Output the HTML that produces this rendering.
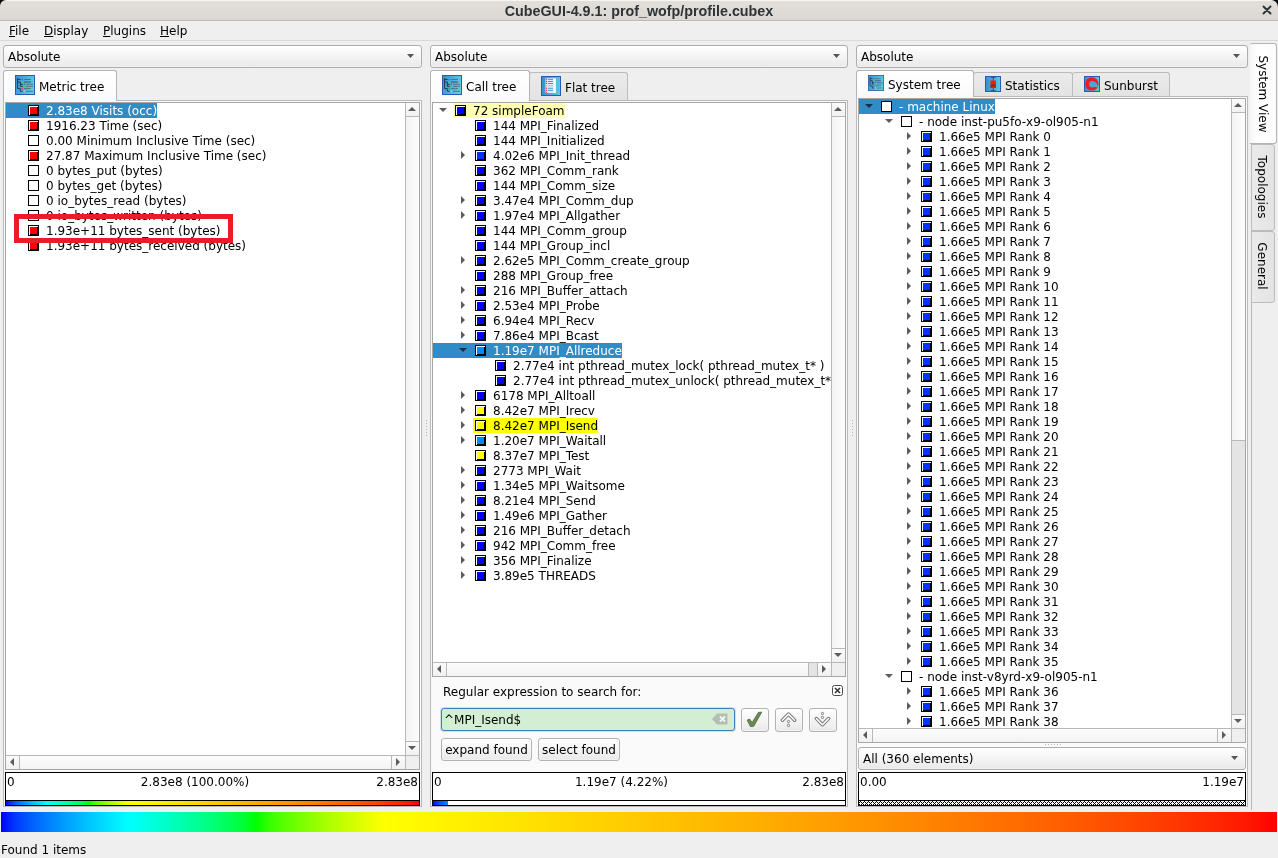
<!DOCTYPE html>
<html><head><meta charset="utf-8"><title>CubeGUI-4.9.1: prof_wofp/profile.cubex</title><style>
*{box-sizing:border-box;margin:0;padding:0}
html,body{width:1278px;height:858px;overflow:hidden;background:#efefef}
body{position:relative;font-family:"DejaVu Sans","Liberation Sans",sans-serif;font-size:12px;color:#000;line-height:15px}
#root{position:absolute;left:0;top:0;width:1278px;height:858px;overflow:hidden;will-change:transform}
.a{position:absolute}
#tb{left:0;top:0;width:1278px;height:10px;background:#000}
#title{left:0;top:0;width:1278px;height:21px;background:linear-gradient(#f6f5f3 0,#f6f5f3 1px,#e2deda 1px,#dbd7d2 100%);border-bottom:1px solid #c1b9b1;border-radius:6px 7px 0 0}
#ttext{left:0;top:0;width:1278px;text-align:center;font:bold 14.3px/23px "Liberation Sans",sans-serif;color:#2e3436}
#menu{left:0;top:21px;width:1278px;height:20px;background:#efefef;border-bottom:1px solid #d9d9d9;border-top:1px solid #f3f3f3}
.mi{top:24px;height:15px;line-height:15px}
.combo{height:23px;border:1px solid #adadad;border-radius:3px;background:linear-gradient(#ffffff,#e9e9e9);line-height:21px;padding-top:1px;padding-left:4px;box-shadow:inset 0 0 0 1px rgba(255,255,255,.35)}
.combo i{position:absolute;right:7px;top:8px;width:7px;height:4px;background:#555;clip-path:polygon(0 0,100% 0,50% 100%)}
.pane{border:1px solid #b9b9b9;background:#fafafa}
.tab{border:1px solid #b4b4b4;border-bottom:none;border-radius:3px 3px 0 0;white-space:nowrap}
.tab.sel{background:linear-gradient(#ffffff,#fafafa);z-index:3}
.tab.un{background:linear-gradient(#ebebeb,#e3e3e3);z-index:1;border-color:#bcbcbc}
.tab span{position:absolute;line-height:15px}
.tree{border:1px solid #a6a6a6;background:#fff}
.vp{overflow:hidden;background:#fff}
.r{position:absolute;height:15px;line-height:15px;white-space:nowrap;padding-right:0;padding-top:1px}
b{position:absolute;width:11px;height:11px;border:1px solid #000;background:#fff}
b.f::after{content:"";position:absolute;left:1px;top:1px;width:7px;height:7px;border-right:1px solid #000;border-bottom:1px solid #000;background:var(--c)}
s{position:absolute;width:0;height:0}
s.c{border-top:4px solid transparent;border-bottom:4px solid transparent;border-left:4px solid #5c5c5c}
s.o{border-left:4px solid transparent;border-right:4px solid transparent;border-top:4px solid #5c5c5c}
s.o.k{border-top-color:#1b2e3d}
.vs{width:14px;border-left:1px solid #b8b8b8;background:#e4e4e4}
.hs{height:14px;border-top:1px solid #b8b8b8;background:#e4e4e4}
.sbtn{background:linear-gradient(#fbfbfb,#f1f1f1);border:0 solid #b8b8b8}
.hnd{background:linear-gradient(90deg,#f3f3f3,#fdfdfd);border:0 solid #b8b8b8}
.hndh{background:linear-gradient(#fdfdfd,#f3f3f3);border:0 solid #b8b8b8}
.ar{position:absolute;width:0;height:0}
.ar.u{border-left:4px solid transparent;border-right:4px solid transparent;border-bottom:4px solid #5c5c5c}
.ar.d{border-left:4px solid transparent;border-right:4px solid transparent;border-top:4px solid #5c5c5c}
.ar.l{border-top:4px solid transparent;border-bottom:4px solid transparent;border-right:4px solid #5c5c5c}
.ar.rt{border-top:4px solid transparent;border-bottom:4px solid transparent;border-left:4px solid #5c5c5c}
.vbox{border:1px solid #000;background:#fff;height:34px}
.vbox span{position:absolute;top:2px;line-height:15px;white-space:nowrap}
.vbox .st{position:absolute;left:0;right:0;bottom:0;height:5px;border-top:1px solid #000}
.btn{border:1px solid #b2b2b2;border-radius:3px;background:linear-gradient(#ffffff,#e9e9e9);text-align:center;line-height:21px;padding-top:1px;box-shadow:inset 0 0 0 1px rgba(255,255,255,.35);white-space:nowrap}
.vt{border:1px solid #b4b4b4;border-radius:0 3px 3px 0}
.vt span{position:absolute;left:50%;top:50%;white-space:nowrap;line-height:15px;transform:translate(-50%,-50%) rotate(90deg)}
</style></head>
<body><div id="root">
<div class="a" id="tb"></div><div class="a" id="title"></div>
<div class="a" id="ttext">CubeGUI-4.9.1: prof_wofp/profile.cubex</div>
<svg class="a" style="left:1262px;top:5px" width="10" height="10" viewBox="0 0 10 10"><path d="M1.5 1.5 L8.5 8.5 M8.5 1.5 L1.5 8.5" stroke="#2e3436" stroke-width="1.9" stroke-linecap="round" fill="none"/></svg>
<div class="a" id="menu"></div>
<div class="a mi" style="left:9px"><u>F</u>ile</div>
<div class="a mi" style="left:44px"><u>D</u>isplay</div>
<div class="a mi" style="left:103px"><u>P</u>lugins</div>
<div class="a mi" style="left:160px"><u>H</u>elp</div>
<div class="a combo" style="left:3px;top:45px;width:419px">Absolute<i></i></div>
<div class="a pane" style="left:3px;top:100px;width:419px;height:707px"></div>
<div class="a tab sel" style="left:3px;top:70px;width:114px;height:31px"><div class="a" style="left:11px;top:4px;line-height:0"><svg width="20" height="20" viewBox="0 0 20 20"><defs><linearGradient id="g1" x1="0" x2="1" y1="0" y2="0.3"><stop offset="0" stop-color="#3a8cd6"/><stop offset="1" stop-color="#5ccbe0"/></linearGradient></defs><rect x=".5" y=".5" width="19" height="19" fill="url(#g1)" stroke="#2b5bb0"/><path d="M2.6 3 V13.6 H5.4 V16.3 H7.6 M2.6 4.5 H5.6 M2.6 7 H5.4 V11.4 H7.7 M5.4 9.3 H7.7" fill="none" stroke="#2d3a44" stroke-width="1"/><g stroke="#4a6b78" stroke-width="1" opacity=".85"><path d="M9 4.5H16M11 9.3H18M11 11.4H18M9 13.6H16M11 16.3H18"/><path d="M9 7H16" stroke-width="1.6"/></g><rect x="6.8" y="3.9" width="1.2" height="1.2" fill="#3f5fe0"/><rect x="6.7" y="6.2" width="1.4" height="1.8" fill="#2fe04a"/><rect x="8.8" y="8.7" width="1.2" height="1.2" fill="#3f5fe0"/><rect x="8.6" y="10.7" width="1.5" height="1.5" fill="#20e83a"/><rect x="6.8" y="13" width="1.2" height="1.4" fill="#d04060"/><rect x="8.7" y="15.5" width="1.3" height="1.6" fill="#e8d040"/></svg></div><span style="left:35px;top:9px">Metric tree</span></div>
<div class="a tree" style="left:5px;top:102px;width:415px;height:668px"></div>
<div class="a vp" style="left:6px;top:103px;width:399px;height:652px">
<div class="r" style="left:0;top:0px;padding-left:40px;background:#308cc6;color:#fff">2.83e8 Visits (occ)</div><b class="f" style="left:22px;top:2px;--c:#ff0000"></b>
<div class="r" style="left:40px;top:15px">1916.23 Time (sec)</div><b class="f" style="left:22px;top:17px;--c:#ff0000"></b>
<div class="r" style="left:40px;top:30px">0.00 Minimum Inclusive Time (sec)</div><b style="left:22px;top:32px"></b>
<div class="r" style="left:40px;top:45px">27.87 Maximum Inclusive Time (sec)</div><b class="f" style="left:22px;top:47px;--c:#ff0000"></b>
<div class="r" style="left:40px;top:60px">0 bytes_put (bytes)</div><b style="left:22px;top:62px"></b>
<div class="r" style="left:40px;top:75px">0 bytes_get (bytes)</div><b style="left:22px;top:77px"></b>
<div class="r" style="left:40px;top:90px">0 io_bytes_read (bytes)</div><b style="left:22px;top:92px"></b>
<div class="r" style="left:40px;top:105px">0 io_bytes_written (bytes)</div><b style="left:22px;top:107px"></b>
<div class="r" style="left:40px;top:120px">1.93e+11 bytes_sent (bytes)</div><b class="f" style="left:22px;top:122px;--c:#ff0000"></b>
<div class="r" style="left:40px;top:135px">1.93e+11 bytes_received (bytes)</div><b class="f" style="left:22px;top:137px;--c:#ff0000"></b>
</div>
<div class="a vs" style="left:405px;top:103px;height:652px"><div class="a sbtn" style="left:0;top:0;width:13px;height:14px;border-bottom-width:1px"><div class="ar u" style="left:2px;top:4px"></div></div><div class="a sbtn" style="left:0;bottom:0;width:13px;height:14px;border-top-width:1px"><div class="ar d" style="left:2px;top:4px"></div></div>
<div class="a hnd" style="left:0;top:14px;width:13px;height:624px;"></div></div>
<div class="a" style="left:405px;top:755px;width:14px;height:14px;background:#efefef;border-left:1px solid #b8b8b8;border-top:1px solid #b8b8b8"></div>
<div class="a hs" style="left:6px;top:755px;width:399px"><div class="a sbtn" style="left:0;top:0;width:14px;height:13px;border-right-width:1px"><div class="ar l" style="left:4px;top:2px"></div></div><div class="a sbtn" style="right:0;top:0;width:14px;height:13px;border-left-width:1px"><div class="ar rt" style="left:4px;top:2px"></div></div>
<div class="a hndh" style="left:14px;top:0;width:371px;height:13px;"></div></div>
<div class="a vbox" style="left:5px;top:772px;width:415px"><span style="left:1px">0</span><span style="left:0;right:35px;text-align:center">2.83e8 (100.00%)</span><span style="right:1px">2.83e8</span><div class="st" style="background:linear-gradient(90deg,#0000ff 0%,#0033ff 1%,#0053ff 2%,#006eff 3%,#0086ff 4%,#009dff 5%,#00b2ff 6%,#00c7ff 7%,#00daff 8%,#00edff 9%,#00ffff 10%,#00ffed 11%,#00ffda 12%,#00ffc7 13%,#00ffb2 14%,#00ff9d 15%,#00ff86 16%,#00ff6e 17%,#00ff53 18%,#00ff33 19%,#00ff00 20%,#33ff00 21%,#53ff00 22%,#6eff00 23%,#86ff00 24%,#9dff00 25%,#b2ff00 26%,#c7ff00 27%,#daff00 28%,#edff00 29%,#ffff00 30%,#fff900 32.5%,#fff200 35%,#ffec00 37.5%,#ffe500 40%,#ffde00 42.5%,#ffd700 45%,#ffd000 47.5%,#ffc900 50%,#ffc200 52.5%,#ffbb00 55%,#ffb400 57.5%,#ffac00 60%,#ffa500 62.5%,#ff9d00 65%,#ff9500 67.5%,#ff8d00 70%,#ff8500 72.5%,#ff7c00 75%,#ff7300 77.5%,#ff6a00 80%,#ff6100 82.5%,#ff5700 85%,#ff4c00 87.5%,#ff4100 90%,#ff3500 92.5%,#ff2800 95%,#ff1900 97.5%,#ff0000 100%)"></div></div>
<div class="a" style="left:14px;top:214px;width:219px;height:29px;border:5px solid #ed1c24;z-index:9"></div>
<div class="a combo" style="left:430px;top:45px;width:418px">Absolute<i></i></div>
<div class="a pane" style="left:430px;top:100px;width:418px;height:707px"></div>
<div class="a tab sel" style="left:430px;top:70px;width:100px;height:31px"><div class="a" style="left:11px;top:4px;line-height:0"><svg width="20" height="20" viewBox="0 0 20 20"><defs><linearGradient id="g2" x1="0" x2="1" y1="0" y2="0.3"><stop offset="0" stop-color="#3a8cd6"/><stop offset="1" stop-color="#5ccbe0"/></linearGradient></defs><rect x=".5" y=".5" width="19" height="19" fill="url(#g2)" stroke="#2b5bb0"/><path d="M2.6 3 V13.6 H5.4 V16.3 H7.6 M2.6 4.5 H5.6 M2.6 7 H5.4 V11.4 H7.7 M5.4 9.3 H7.7" fill="none" stroke="#2d3a44" stroke-width="1"/><g stroke="#4a6b78" stroke-width="1" opacity=".85"><path d="M9 4.5H16M11 9.3H18M11 11.4H18M9 13.6H16M11 16.3H18"/><path d="M9 7H16" stroke-width="1.6"/></g><rect x="6.8" y="3.9" width="1.2" height="1.2" fill="#3f5fe0"/><rect x="6.7" y="6.2" width="1.4" height="1.8" fill="#2fe04a"/><rect x="8.8" y="8.7" width="1.2" height="1.2" fill="#3f5fe0"/><rect x="8.6" y="10.7" width="1.5" height="1.5" fill="#20e83a"/><rect x="6.8" y="13" width="1.2" height="1.4" fill="#d04060"/><rect x="8.7" y="15.5" width="1.3" height="1.6" fill="#e8d040"/></svg></div><span style="left:35px;top:9px">Call tree</span></div>
<div class="a tab un" style="left:529px;top:72px;width:99px;height:28px"><div class="a" style="left:11px;top:3px;line-height:0"><svg width="20" height="20" viewBox="0 0 20 20"><defs><linearGradient id="gf" x1="0" x2="1"><stop offset="0" stop-color="#3a8cd6"/><stop offset="1" stop-color="#5ccbe0"/></linearGradient></defs><rect x=".5" y=".5" width="19" height="19" fill="url(#gf)" stroke="#2b5bb0"/><rect x="4.4" y="2.2" width="10.6" height="14.8" fill="#e8f4fb" opacity=".92"/><rect x="12.6" y="3" width="2" height="13.6" fill="#f6fbff"/><rect x="4.8" y="2.7" width="1.3" height="1.2" fill="#f03030" opacity="1"/><rect x="7" y="2.9" width="5" height=".9" fill="#3a8cd6" opacity="1"/><rect x="4.8" y="4.8" width="1.3" height="1.2" fill="#f03030" opacity="1"/><rect x="7" y="5.0" width="5" height=".9" fill="#3a8cd6" opacity="1"/><rect x="4.8" y="6.8" width="1.3" height="1.2" fill="#f03030" opacity="1"/><rect x="7" y="7.0" width="5" height=".9" fill="#3a8cd6" opacity="1"/><rect x="4.8" y="9.1" width="1.3" height="1.2" fill="#f03030" opacity=".45"/><rect x="7" y="9.3" width="5" height=".9" fill="#3a8cd6" opacity=".45"/><rect x="4.8" y="11.6" width="1.3" height="1.2" fill="#f03030" opacity="1"/><rect x="7" y="11.8" width="5" height=".9" fill="#3a8cd6" opacity="1"/><rect x="4.8" y="13.7" width="1.3" height="1.2" fill="#f03030" opacity="1"/><rect x="7" y="13.9" width="5" height=".9" fill="#3a8cd6" opacity="1"/><rect x="4.8" y="15.7" width="1.3" height="1.2" fill="#f03030" opacity="1"/></svg></div><span style="left:35px;top:8px">Flat tree</span></div>
<div class="a tree" style="left:432px;top:102px;width:414px;height:575px"></div>
<div class="a vp" style="left:433px;top:103px;width:398px;height:559px">
<div class="r" style="left:20px;top:0px;padding-left:20px;background:#ffffb0">72 simpleFoam</div><s class="o" style="left:6px;top:5px"></s><b class="f" style="left:22px;top:2px;--c:#0000ff"></b>
<div class="r" style="left:60px;top:15px">144 MPI_Finalized</div><b class="f" style="left:42px;top:17px;--c:#0000ff"></b>
<div class="r" style="left:60px;top:30px">144 MPI_Initialized</div><b class="f" style="left:42px;top:32px;--c:#0000ff"></b>
<div class="r" style="left:60px;top:45px">4.02e6 MPI_Init_thread</div><s class="c" style="left:28px;top:48px"></s><b class="f" style="left:42px;top:47px;--c:#0033ff"></b>
<div class="r" style="left:60px;top:60px">362 MPI_Comm_rank</div><b class="f" style="left:42px;top:62px;--c:#0000ff"></b>
<div class="r" style="left:60px;top:75px">144 MPI_Comm_size</div><b class="f" style="left:42px;top:77px;--c:#0000ff"></b>
<div class="r" style="left:60px;top:90px">3.47e4 MPI_Comm_dup</div><s class="c" style="left:28px;top:93px"></s><b class="f" style="left:42px;top:92px;--c:#0000ff"></b>
<div class="r" style="left:60px;top:105px">1.97e4 MPI_Allgather</div><s class="c" style="left:28px;top:108px"></s><b class="f" style="left:42px;top:107px;--c:#0000ff"></b>
<div class="r" style="left:60px;top:120px">144 MPI_Comm_group</div><b class="f" style="left:42px;top:122px;--c:#0000ff"></b>
<div class="r" style="left:60px;top:135px">144 MPI_Group_incl</div><b class="f" style="left:42px;top:137px;--c:#0000ff"></b>
<div class="r" style="left:60px;top:150px">2.62e5 MPI_Comm_create_group</div><s class="c" style="left:28px;top:153px"></s><b class="f" style="left:42px;top:152px;--c:#0000ff"></b>
<div class="r" style="left:60px;top:165px">288 MPI_Group_free</div><b class="f" style="left:42px;top:167px;--c:#0000ff"></b>
<div class="r" style="left:60px;top:180px">216 MPI_Buffer_attach</div><s class="c" style="left:28px;top:183px"></s><b class="f" style="left:42px;top:182px;--c:#0000ff"></b>
<div class="r" style="left:60px;top:195px">2.53e4 MPI_Probe</div><s class="c" style="left:28px;top:198px"></s><b class="f" style="left:42px;top:197px;--c:#0000ff"></b>
<div class="r" style="left:60px;top:210px">6.94e4 MPI_Recv</div><s class="c" style="left:28px;top:213px"></s><b class="f" style="left:42px;top:212px;--c:#0000ff"></b>
<div class="r" style="left:60px;top:225px">7.86e4 MPI_Bcast</div><s class="c" style="left:28px;top:228px"></s><b class="f" style="left:42px;top:227px;--c:#0000ff"></b>
<div class="r" style="left:0;top:240px;padding-left:60px;background:#308cc6;color:#fff">1.19e7 MPI_Allreduce</div><s class="o k" style="left:26px;top:245px"></s><b class="f" style="left:42px;top:242px;--c:#0088ff"></b>
<div class="r" style="left:80px;top:255px">2.77e4 int pthread_mutex_lock( pthread_mutex_t* )</div><b class="f" style="left:62px;top:257px;--c:#0000ff"></b>
<div class="r" style="left:80px;top:270px">2.77e4 int pthread_mutex_unlock( pthread_mutex_t* )</div><b class="f" style="left:62px;top:272px;--c:#0000ff"></b>
<div class="r" style="left:60px;top:285px">6178 MPI_Alltoall</div><s class="c" style="left:28px;top:288px"></s><b class="f" style="left:42px;top:287px;--c:#0000ff"></b>
<div class="r" style="left:60px;top:300px">8.42e7 MPI_Irecv</div><s class="c" style="left:28px;top:303px"></s><b class="f" style="left:42px;top:302px;--c:#ffff00"></b>
<div class="r" style="left:40px;top:315px;padding-left:20px;background:#ffff00">8.42e7 MPI_Isend</div><s class="c" style="left:28px;top:318px"></s><b class="f" style="left:42px;top:317px;--c:#ffff00"></b>
<div class="r" style="left:60px;top:330px">1.20e7 MPI_Waitall</div><s class="c" style="left:28px;top:333px"></s><b class="f" style="left:42px;top:332px;--c:#0088ff"></b>
<div class="r" style="left:60px;top:345px">8.37e7 MPI_Test</div><b class="f" style="left:42px;top:347px;--c:#ffff00"></b>
<div class="r" style="left:60px;top:360px">2773 MPI_Wait</div><s class="c" style="left:28px;top:363px"></s><b class="f" style="left:42px;top:362px;--c:#0000ff"></b>
<div class="r" style="left:60px;top:375px">1.34e5 MPI_Waitsome</div><s class="c" style="left:28px;top:378px"></s><b class="f" style="left:42px;top:377px;--c:#0000ff"></b>
<div class="r" style="left:60px;top:390px">8.21e4 MPI_Send</div><s class="c" style="left:28px;top:393px"></s><b class="f" style="left:42px;top:392px;--c:#0000ff"></b>
<div class="r" style="left:60px;top:405px">1.49e6 MPI_Gather</div><s class="c" style="left:28px;top:408px"></s><b class="f" style="left:42px;top:407px;--c:#0000ff"></b>
<div class="r" style="left:60px;top:420px">216 MPI_Buffer_detach</div><s class="c" style="left:28px;top:423px"></s><b class="f" style="left:42px;top:422px;--c:#0000ff"></b>
<div class="r" style="left:60px;top:435px">942 MPI_Comm_free</div><s class="c" style="left:28px;top:438px"></s><b class="f" style="left:42px;top:437px;--c:#0000ff"></b>
<div class="r" style="left:60px;top:450px">356 MPI_Finalize</div><s class="c" style="left:28px;top:453px"></s><b class="f" style="left:42px;top:452px;--c:#0000ff"></b>
<div class="r" style="left:60px;top:465px">3.89e5 THREADS</div><s class="c" style="left:28px;top:468px"></s><b class="f" style="left:42px;top:467px;--c:#0000ff"></b>
</div>
<div class="a vs" style="left:831px;top:103px;height:559px"><div class="a sbtn" style="left:0;top:0;width:13px;height:14px;border-bottom-width:1px"><div class="ar u" style="left:2px;top:4px"></div></div><div class="a sbtn" style="left:0;bottom:0;width:13px;height:14px;border-top-width:1px"><div class="ar d" style="left:2px;top:4px"></div></div>
<div class="a hnd" style="left:0;top:14px;width:13px;height:531px;"></div></div>
<div class="a" style="left:831px;top:662px;width:14px;height:14px;background:#efefef;border-left:1px solid #b8b8b8;border-top:1px solid #b8b8b8"></div>
<div class="a hs" style="left:433px;top:662px;width:398px"><div class="a sbtn" style="left:0;top:0;width:14px;height:13px;border-right-width:1px"><div class="ar l" style="left:4px;top:2px"></div></div><div class="a sbtn" style="right:0;top:0;width:14px;height:13px;border-left-width:1px"><div class="ar rt" style="left:4px;top:2px"></div></div>
<div class="a hndh" style="left:14px;top:0;width:362px;height:13px;border-right-width:1px"></div></div>
<div class="a" style="left:443px;top:685px;white-space:nowrap">Regular expression to search for:</div>
<svg class="a" style="left:832px;top:685px" width="11" height="11" viewBox="0 0 11 11"><rect x=".5" y=".5" width="10" height="10" rx="2" fill="#fcfcfc" stroke="#4a4a4a"/><path d="M3 3L8 8M8 3L3 8" stroke="#3a3a3a" stroke-width="1.7"/></svg>
<div class="a" style="left:441px;top:708px;width:294px;height:23px;border:1px solid #3b7fbd;border-radius:3px;background:#d3efd3;line-height:21px;padding-top:1px;padding-left:2px;box-shadow:0 0 0 1px rgba(80,150,210,.25)">^MPI_Isend$<svg class="a" style="right:6px;top:4px" width="16" height="12" viewBox="0 0 16 12"><path d="M0 6L5 .5H15.5V11.5H5Z" fill="#b4bcb4"/><path d="M8 3.5L13 8.5M13 3.5L8 8.5" stroke="#eef6ee" stroke-width="1.8"/></svg></div>
<div class="a btn" style="left:741px;top:708px;width:28px;height:24px"><svg class="a" style="left:4px;top:2px" width="18" height="18" viewBox="0 0 18 18"><path d="M1.2 9.2L3.5 8L6.2 11.5L12.4 1.4L15.8 1.1L7.7 15.3L4.4 15.5Z" fill="#6a8c52" stroke="#476536" stroke-width=".8" stroke-linejoin="round"/></svg></div>
<div class="a btn" style="left:775px;top:708px;width:28px;height:24px"><svg class="a" style="left:4px;top:2px" width="18" height="18" viewBox="0 0 18 18"><g fill="none" stroke-linecap="round" stroke-linejoin="round"><path d="M2.4 9.2L8.5 3.1L14.6 9.2" stroke="#7a7a7a" stroke-width="3.5"/><path d="M2.4 9.2L8.5 3.1L14.6 9.2" stroke="#fcfcfc" stroke-width="1.5"/></g><circle cx="8.5" cy="10.5" r="1.15" fill="#fcfcfc" stroke="#7a7a7a" stroke-width="1"/><circle cx="8.5" cy="14.45" r="1.15" fill="#fcfcfc" stroke="#7a7a7a" stroke-width="1"/></svg></div>
<div class="a btn" style="left:809px;top:708px;width:28px;height:24px"><svg class="a" style="left:4px;top:2px" width="18" height="18" viewBox="0 0 18 18"><g fill="none" stroke-linecap="round" stroke-linejoin="round"><path d="M2.4 7.6L8.45 13.7L14.5 7.6" stroke="#7a7a7a" stroke-width="3.5"/><path d="M2.4 7.6L8.45 13.7L14.5 7.6" stroke="#fcfcfc" stroke-width="1.5"/></g><circle cx="8.45" cy="2.5" r="1.15" fill="#fcfcfc" stroke="#7a7a7a" stroke-width="1"/><circle cx="8.45" cy="6.4" r="1.15" fill="#fcfcfc" stroke="#7a7a7a" stroke-width="1"/></svg></div>
<div class="a btn" style="left:441px;top:738px;width:91px;height:23px">expand found</div>
<div class="a btn" style="left:538px;top:738px;width:82px;height:23px">select found</div>
<div class="a vbox" style="left:432px;top:772px;width:414px"><span style="left:1px">0</span><span style="left:0;right:35px;text-align:center">1.19e7 (4.22%)</span><span style="right:1px">2.83e8</span><div class="st" style="background:linear-gradient(90deg,#0000ff 0px,#0028ff 2.5px,#0041ff 5px,#0056ff 7.5px,#0069ff 10px,#007bff 12.5px,#008bff 15px,#fff 15px)"></div></div>
<div class="a combo" style="left:856px;top:45px;width:392px">Absolute<i></i></div>
<div class="a pane" style="left:856px;top:96px;width:392px;height:711px"></div>
<div class="a tab sel" style="left:856px;top:70px;width:118px;height:27px"><div class="a" style="left:11px;top:4px;line-height:0"><svg width="16" height="16" viewBox="0 0 20 20"><defs><linearGradient id="g3" x1="0" x2="1" y1="0" y2="0.3"><stop offset="0" stop-color="#3a8cd6"/><stop offset="1" stop-color="#5ccbe0"/></linearGradient></defs><rect x=".5" y=".5" width="19" height="19" fill="url(#g3)" stroke="#2b5bb0"/><path d="M2.6 3 V13.6 H5.4 V16.3 H7.6 M2.6 4.5 H5.6 M2.6 7 H5.4 V11.4 H7.7 M5.4 9.3 H7.7" fill="none" stroke="#2d3a44" stroke-width="1"/><g stroke="#4a6b78" stroke-width="1" opacity=".85"><path d="M9 4.5H16M11 9.3H18M11 11.4H18M9 13.6H16M11 16.3H18"/><path d="M9 7H16" stroke-width="1.6"/></g><rect x="6.8" y="3.9" width="1.2" height="1.2" fill="#3f5fe0"/><rect x="6.7" y="6.2" width="1.4" height="1.8" fill="#2fe04a"/><rect x="8.8" y="8.7" width="1.2" height="1.2" fill="#3f5fe0"/><rect x="8.6" y="10.7" width="1.5" height="1.5" fill="#20e83a"/><rect x="6.8" y="13" width="1.2" height="1.4" fill="#d04060"/><rect x="8.7" y="15.5" width="1.3" height="1.6" fill="#e8d040"/></svg></div><span style="left:31px;top:7px">System tree</span></div>
<div class="a tab un" style="left:973px;top:72px;width:100px;height:24px"><div class="a" style="left:11px;top:3px;line-height:0"><svg width="16" height="16" viewBox="0 0 16 16"><defs><linearGradient id="gs" x1="0" x2="1"><stop offset="0" stop-color="#3a8cd6"/><stop offset="1" stop-color="#5ccbe0"/></linearGradient></defs><rect x=".5" y=".5" width="15" height="15" fill="url(#gs)" stroke="#2b5bb0"/><path d="M8.3 1.4V14.6M6 1.5H10.6M6 14.5H10.6" stroke="#2d4a5a" stroke-width=".8" fill="none"/><rect x="5.5" y="4.5" width="5.4" height="3.8" fill="#ff1a00"/><rect x="5.5" y="8.3" width="5.4" height="3.7" fill="#b81200"/><rect x="5.5" y="10.3" width="5.4" height="1.7" fill="#e0200c"/></svg></div><span style="left:31px;top:6px">Statistics</span></div>
<div class="a tab un" style="left:1072px;top:72px;width:98px;height:24px"><div class="a" style="left:11px;top:3px;line-height:0"><svg width="16" height="16" viewBox="0 0 16 16"><defs><linearGradient id="gu" x1="0" x2="1"><stop offset="0" stop-color="#3a8cd6"/><stop offset="1" stop-color="#5ccbe0"/></linearGradient></defs><rect x=".5" y=".5" width="15" height="15" fill="url(#gu)" stroke="#2b5bb0"/><circle cx="7.9" cy="7.9" r="6.7" fill="#ea1c26"/><path d="M11 6L12.9 7.6L13.4 9.2L15 10.4L12.8 11.6L10.8 10.8Z" fill="#58b0dc" opacity=".9"/><circle cx="8.4" cy="8.3" r="3.3" fill="#4aa6d8"/></svg></div><span style="left:31px;top:6px">Sunburst</span></div>
<div class="a tree" style="left:858px;top:98px;width:388px;height:645px"></div>
<div class="a vp" style="left:859px;top:99px;width:372px;height:629px">
<div class="r" style="left:0;top:0px;padding-left:40px;background:#308cc6;color:#fff">- machine Linux</div><s class="o k" style="left:6px;top:5px"></s><b style="left:22px;top:2px"></b>
<div class="r" style="left:60px;top:15px">- node inst-pu5fo-x9-ol905-n1</div><s class="o" style="left:26px;top:20px"></s><b style="left:42px;top:17px"></b>
<div class="r" style="left:80px;top:30px">1.66e5 MPI Rank 0</div><s class="c" style="left:48px;top:33px"></s><b class="f" style="left:62px;top:32px;--c:#0033ff"></b>
<div class="r" style="left:80px;top:45px">1.66e5 MPI Rank 1</div><s class="c" style="left:48px;top:48px"></s><b class="f" style="left:62px;top:47px;--c:#0033ff"></b>
<div class="r" style="left:80px;top:60px">1.66e5 MPI Rank 2</div><s class="c" style="left:48px;top:63px"></s><b class="f" style="left:62px;top:62px;--c:#0033ff"></b>
<div class="r" style="left:80px;top:75px">1.66e5 MPI Rank 3</div><s class="c" style="left:48px;top:78px"></s><b class="f" style="left:62px;top:77px;--c:#0033ff"></b>
<div class="r" style="left:80px;top:90px">1.66e5 MPI Rank 4</div><s class="c" style="left:48px;top:93px"></s><b class="f" style="left:62px;top:92px;--c:#0033ff"></b>
<div class="r" style="left:80px;top:105px">1.66e5 MPI Rank 5</div><s class="c" style="left:48px;top:108px"></s><b class="f" style="left:62px;top:107px;--c:#0033ff"></b>
<div class="r" style="left:80px;top:120px">1.66e5 MPI Rank 6</div><s class="c" style="left:48px;top:123px"></s><b class="f" style="left:62px;top:122px;--c:#0033ff"></b>
<div class="r" style="left:80px;top:135px">1.66e5 MPI Rank 7</div><s class="c" style="left:48px;top:138px"></s><b class="f" style="left:62px;top:137px;--c:#0033ff"></b>
<div class="r" style="left:80px;top:150px">1.66e5 MPI Rank 8</div><s class="c" style="left:48px;top:153px"></s><b class="f" style="left:62px;top:152px;--c:#0033ff"></b>
<div class="r" style="left:80px;top:165px">1.66e5 MPI Rank 9</div><s class="c" style="left:48px;top:168px"></s><b class="f" style="left:62px;top:167px;--c:#0033ff"></b>
<div class="r" style="left:80px;top:180px">1.66e5 MPI Rank 10</div><s class="c" style="left:48px;top:183px"></s><b class="f" style="left:62px;top:182px;--c:#0033ff"></b>
<div class="r" style="left:80px;top:195px">1.66e5 MPI Rank 11</div><s class="c" style="left:48px;top:198px"></s><b class="f" style="left:62px;top:197px;--c:#0033ff"></b>
<div class="r" style="left:80px;top:210px">1.66e5 MPI Rank 12</div><s class="c" style="left:48px;top:213px"></s><b class="f" style="left:62px;top:212px;--c:#0033ff"></b>
<div class="r" style="left:80px;top:225px">1.66e5 MPI Rank 13</div><s class="c" style="left:48px;top:228px"></s><b class="f" style="left:62px;top:227px;--c:#0033ff"></b>
<div class="r" style="left:80px;top:240px">1.66e5 MPI Rank 14</div><s class="c" style="left:48px;top:243px"></s><b class="f" style="left:62px;top:242px;--c:#0033ff"></b>
<div class="r" style="left:80px;top:255px">1.66e5 MPI Rank 15</div><s class="c" style="left:48px;top:258px"></s><b class="f" style="left:62px;top:257px;--c:#0033ff"></b>
<div class="r" style="left:80px;top:270px">1.66e5 MPI Rank 16</div><s class="c" style="left:48px;top:273px"></s><b class="f" style="left:62px;top:272px;--c:#0033ff"></b>
<div class="r" style="left:80px;top:285px">1.66e5 MPI Rank 17</div><s class="c" style="left:48px;top:288px"></s><b class="f" style="left:62px;top:287px;--c:#0033ff"></b>
<div class="r" style="left:80px;top:300px">1.66e5 MPI Rank 18</div><s class="c" style="left:48px;top:303px"></s><b class="f" style="left:62px;top:302px;--c:#0033ff"></b>
<div class="r" style="left:80px;top:315px">1.66e5 MPI Rank 19</div><s class="c" style="left:48px;top:318px"></s><b class="f" style="left:62px;top:317px;--c:#0033ff"></b>
<div class="r" style="left:80px;top:330px">1.66e5 MPI Rank 20</div><s class="c" style="left:48px;top:333px"></s><b class="f" style="left:62px;top:332px;--c:#0033ff"></b>
<div class="r" style="left:80px;top:345px">1.66e5 MPI Rank 21</div><s class="c" style="left:48px;top:348px"></s><b class="f" style="left:62px;top:347px;--c:#0033ff"></b>
<div class="r" style="left:80px;top:360px">1.66e5 MPI Rank 22</div><s class="c" style="left:48px;top:363px"></s><b class="f" style="left:62px;top:362px;--c:#0033ff"></b>
<div class="r" style="left:80px;top:375px">1.66e5 MPI Rank 23</div><s class="c" style="left:48px;top:378px"></s><b class="f" style="left:62px;top:377px;--c:#0033ff"></b>
<div class="r" style="left:80px;top:390px">1.66e5 MPI Rank 24</div><s class="c" style="left:48px;top:393px"></s><b class="f" style="left:62px;top:392px;--c:#0033ff"></b>
<div class="r" style="left:80px;top:405px">1.66e5 MPI Rank 25</div><s class="c" style="left:48px;top:408px"></s><b class="f" style="left:62px;top:407px;--c:#0033ff"></b>
<div class="r" style="left:80px;top:420px">1.66e5 MPI Rank 26</div><s class="c" style="left:48px;top:423px"></s><b class="f" style="left:62px;top:422px;--c:#0033ff"></b>
<div class="r" style="left:80px;top:435px">1.66e5 MPI Rank 27</div><s class="c" style="left:48px;top:438px"></s><b class="f" style="left:62px;top:437px;--c:#0033ff"></b>
<div class="r" style="left:80px;top:450px">1.66e5 MPI Rank 28</div><s class="c" style="left:48px;top:453px"></s><b class="f" style="left:62px;top:452px;--c:#0033ff"></b>
<div class="r" style="left:80px;top:465px">1.66e5 MPI Rank 29</div><s class="c" style="left:48px;top:468px"></s><b class="f" style="left:62px;top:467px;--c:#0033ff"></b>
<div class="r" style="left:80px;top:480px">1.66e5 MPI Rank 30</div><s class="c" style="left:48px;top:483px"></s><b class="f" style="left:62px;top:482px;--c:#0033ff"></b>
<div class="r" style="left:80px;top:495px">1.66e5 MPI Rank 31</div><s class="c" style="left:48px;top:498px"></s><b class="f" style="left:62px;top:497px;--c:#0033ff"></b>
<div class="r" style="left:80px;top:510px">1.66e5 MPI Rank 32</div><s class="c" style="left:48px;top:513px"></s><b class="f" style="left:62px;top:512px;--c:#0033ff"></b>
<div class="r" style="left:80px;top:525px">1.66e5 MPI Rank 33</div><s class="c" style="left:48px;top:528px"></s><b class="f" style="left:62px;top:527px;--c:#0033ff"></b>
<div class="r" style="left:80px;top:540px">1.66e5 MPI Rank 34</div><s class="c" style="left:48px;top:543px"></s><b class="f" style="left:62px;top:542px;--c:#0033ff"></b>
<div class="r" style="left:80px;top:555px">1.66e5 MPI Rank 35</div><s class="c" style="left:48px;top:558px"></s><b class="f" style="left:62px;top:557px;--c:#0033ff"></b>
<div class="r" style="left:60px;top:570px">- node inst-v8yrd-x9-ol905-n1</div><s class="o" style="left:26px;top:575px"></s><b style="left:42px;top:572px"></b>
<div class="r" style="left:80px;top:585px">1.66e5 MPI Rank 36</div><s class="c" style="left:48px;top:588px"></s><b class="f" style="left:62px;top:587px;--c:#0033ff"></b>
<div class="r" style="left:80px;top:600px">1.66e5 MPI Rank 37</div><s class="c" style="left:48px;top:603px"></s><b class="f" style="left:62px;top:602px;--c:#0033ff"></b>
<div class="r" style="left:80px;top:615px">1.66e5 MPI Rank 38</div><s class="c" style="left:48px;top:618px"></s><b class="f" style="left:62px;top:617px;--c:#0033ff"></b>
</div>
<div class="a vs" style="left:1231px;top:99px;height:629px"><div class="a sbtn" style="left:0;top:0;width:13px;height:14px;border-bottom-width:1px"><div class="ar u" style="left:2px;top:4px"></div></div><div class="a sbtn" style="left:0;bottom:0;width:13px;height:14px;border-top-width:1px"><div class="ar d" style="left:2px;top:4px"></div></div>
<div class="a hnd" style="left:0;top:14px;width:13px;height:328px;border-bottom-width:1px"></div></div>
<div class="a" style="left:1231px;top:728px;width:14px;height:14px;background:#efefef;border-left:1px solid #b8b8b8;border-top:1px solid #b8b8b8"></div>
<div class="a hs" style="left:859px;top:728px;width:372px"><div class="a sbtn" style="left:0;top:0;width:14px;height:13px;border-right-width:1px"><div class="ar l" style="left:4px;top:2px"></div></div><div class="a sbtn" style="right:0;top:0;width:14px;height:13px;border-left-width:1px"><div class="ar rt" style="left:4px;top:2px"></div></div>
<div class="a hndh" style="left:14px;top:0;width:344px;height:13px;"></div></div>
<div class="a" style="left:1045px;top:744px;width:16px;height:1px;background:repeating-linear-gradient(90deg,#b4b4b4 0 1px,transparent 1px 3px)"></div>
<div class="a combo" style="left:858px;top:747px;width:388px">All (360 elements)<i></i></div>
<div class="a vbox" style="left:858px;top:772px;width:388px"><span style="left:1px">0.00</span><span style="right:1px">1.19e7</span><div class="st" style="background:#fff"><svg style="position:absolute;left:0;top:0" width="386" height="4" shape-rendering="crispEdges"><defs><pattern id="d3" width="4" height="4" patternUnits="userSpaceOnUse"><rect width="4" height="4" fill="#fff"/><path d="M1 0h1v1h-1zM0 1h1v1h-1zM2 1h1v1h-1zM3 2h1v1h-1zM0 3h1v1h-1zM2 3h1v1h-1z" fill="#000"/></pattern></defs><rect width="386" height="4" fill="url(#d3)"/></svg></div></div>
<div class="a" style="left:1251px;top:143px;width:1px;height:667px;background:#b9b9b9"></div>
<div class="a vt" style="left:1250px;top:43px;width:27px;height:101px;background:linear-gradient(90deg,#f6f6f6,#ffffff 30%,#fbfbfb);border-left:none;border-radius:2px 3px 3px 0"><span style="margin-left:-1px">System View</span></div>
<div class="a vt" style="left:1251px;top:144px;width:24px;height:87px;background:linear-gradient(90deg,#ebebeb,#e3e3e3);border-color:#bcbcbc"><span style="margin-left:-2px;margin-top:-1px">Topologies</span></div>
<div class="a vt" style="left:1251px;top:231px;width:24px;height:72px;background:linear-gradient(90deg,#ebebeb,#e3e3e3);border-color:#bcbcbc"><span style="margin-left:-2px;margin-top:-1px">General</span></div>
<div class="a" style="left:426px;top:420px;width:1px;height:16px;background:repeating-linear-gradient(#b4b4b4 0 1px,transparent 1px 3px)"></div>
<div class="a" style="left:852px;top:420px;width:1px;height:16px;background:repeating-linear-gradient(#b4b4b4 0 1px,transparent 1px 3px)"></div>
<div class="a" style="left:1px;top:812px;width:1276px;height:20px;background:linear-gradient(90deg,#0000ff 0%,#0033ff 1%,#0053ff 2%,#006eff 3%,#0086ff 4%,#009dff 5%,#00b2ff 6%,#00c7ff 7%,#00daff 8%,#00edff 9%,#00ffff 10%,#00ffed 11%,#00ffda 12%,#00ffc7 13%,#00ffb2 14%,#00ff9d 15%,#00ff86 16%,#00ff6e 17%,#00ff53 18%,#00ff33 19%,#00ff00 20%,#33ff00 21%,#53ff00 22%,#6eff00 23%,#86ff00 24%,#9dff00 25%,#b2ff00 26%,#c7ff00 27%,#daff00 28%,#edff00 29%,#ffff00 30%,#fff900 32.5%,#fff200 35%,#ffec00 37.5%,#ffe500 40%,#ffde00 42.5%,#ffd700 45%,#ffd000 47.5%,#ffc900 50%,#ffc200 52.5%,#ffbb00 55%,#ffb400 57.5%,#ffac00 60%,#ffa500 62.5%,#ff9d00 65%,#ff9500 67.5%,#ff8d00 70%,#ff8500 72.5%,#ff7c00 75%,#ff7300 77.5%,#ff6a00 80%,#ff6100 82.5%,#ff5700 85%,#ff4c00 87.5%,#ff4100 90%,#ff3500 92.5%,#ff2800 95%,#ff1900 97.5%,#ff0000 100%)"></div>
<div class="a" style="left:1px;top:843px;white-space:nowrap">Found 1 items</div>
</div></body></html>
